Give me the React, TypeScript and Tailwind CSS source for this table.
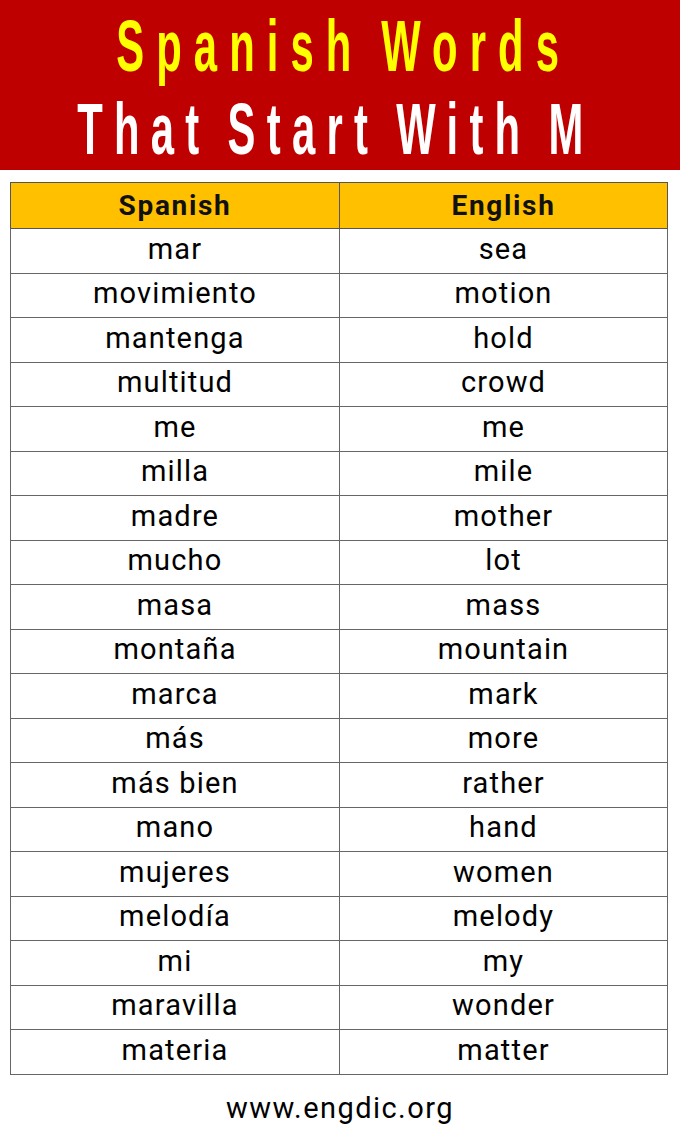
import React from "react";

const rows: [string, string][] = [
  ["mar", "sea"],
  ["movimiento", "motion"],
  ["mantenga", "hold"],
  ["multitud", "crowd"],
  ["me", "me"],
  ["milla", "mile"],
  ["madre", "mother"],
  ["mucho", "lot"],
  ["masa", "mass"],
  ["montaña", "mountain"],
  ["marca", "mark"],
  ["más", "more"],
  ["más bien", "rather"],
  ["mano", "hand"],
  ["mujeres", "women"],
  ["melodía", "melody"],
  ["mi", "my"],
  ["maravilla", "wonder"],
  ["materia", "matter"],
];

export default function App() {
  return (
    <div className="w-[680px] h-[1134px] bg-white overflow-hidden" style={{ fontFamily: "Roboto, 'Noto Sans', sans-serif" }}>
      <div className="h-[170px] bg-[#BF0000] flex flex-col items-center pt-[5px]">
        <div
          className="text-[#FFFF00] font-bold text-[72px] leading-[83px] tracking-[0.29em] pl-[0.15em] [word-spacing:-10px] scale-x-[0.58] whitespace-nowrap"
          style={{ fontFamily: "'Liberation Sans', Arial, sans-serif" }}
        >
          Spanish Words
        </div>
        <div
          className="text-white font-bold text-[72px] leading-[83px] tracking-[0.27em] pr-[0.2em] [word-spacing:-10px] scale-x-[0.58] whitespace-nowrap"
          style={{ fontFamily: "'Liberation Sans', Arial, sans-serif" }}
        >
          That Start With M
        </div>
      </div>
      <div className="pt-[12px] pl-[10px]">
        <table className="border-collapse w-[658px] table-fixed">
          <thead>
            <tr className="h-[46px] bg-[#FFC000]">
              <th className="border border-[#555] w-[329px] text-[28px] font-bold tracking-[0.06em] text-[#111] leading-none">Spanish</th>
              <th className="border border-[#555] text-[28px] font-bold tracking-[0.06em] text-[#111] leading-none">English</th>
            </tr>
          </thead>
          <tbody>
            {rows.map(([es, en]) => (
              <tr key={es} className="h-[44.5px]">
                <td className="border border-[#666] text-center text-[29px] tracking-[0.04em] text-black leading-none pb-[3px]">{es}</td>
                <td className="border border-[#666] text-center text-[29px] tracking-[0.04em] text-black leading-none pb-[3px]">{en}</td>
              </tr>
            ))}
          </tbody>
        </table>
      </div>
      <div className="text-center text-[29px] tracking-[0.05em] text-black mt-[19px] leading-none">www.engdic.org</div>
    </div>
  );
}
